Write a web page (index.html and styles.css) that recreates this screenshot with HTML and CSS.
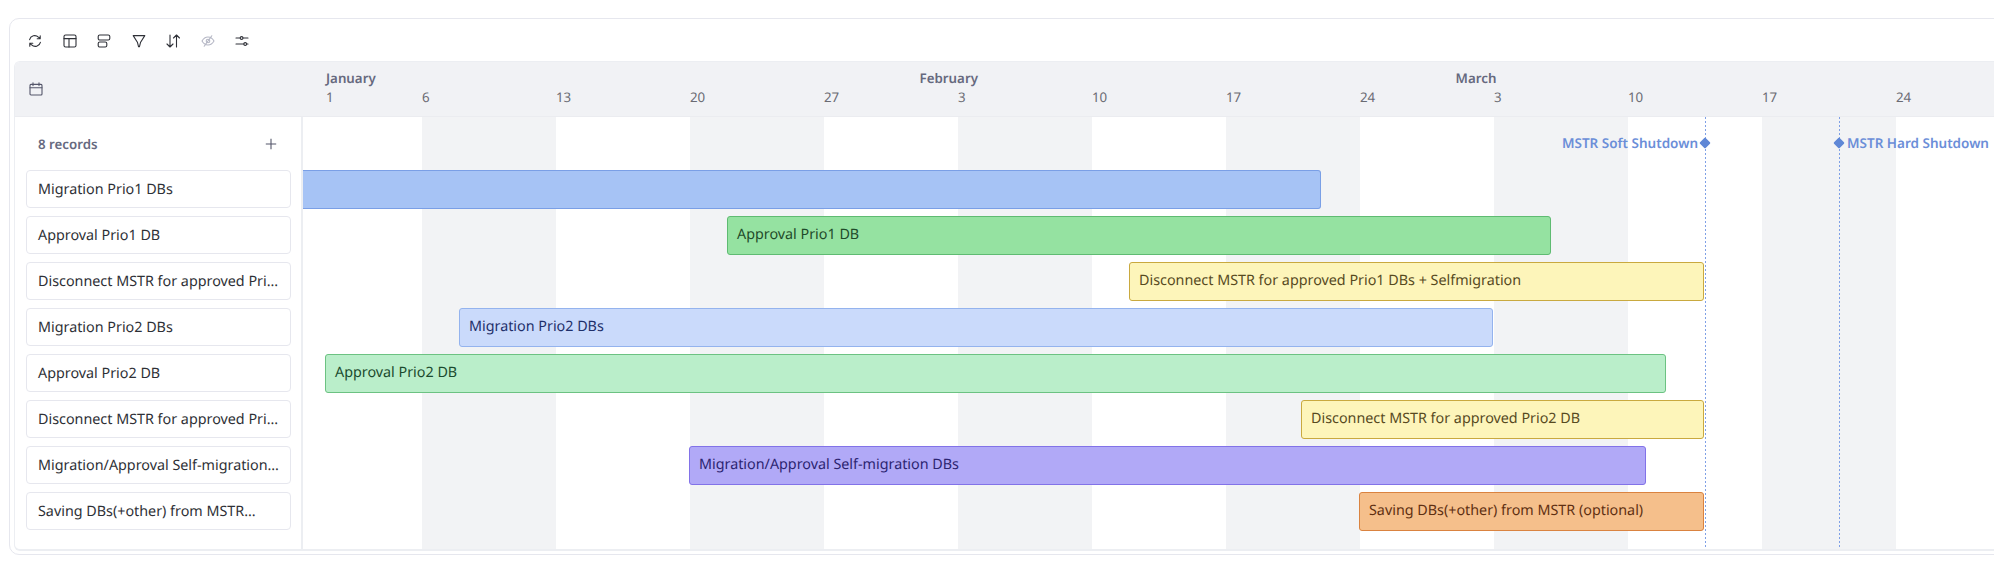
FILE: index.html
```html
<!DOCTYPE html>
<html lang="en">
<head>
<meta charset="utf-8">
<title>Timeline</title>
<link rel="stylesheet" href="styles.css">
</head>
<body>
<div class="card">
  <div class="toolbar">
    <svg class="ico" viewBox="0 0 14 14"><path d="M1.600 5.600A5.200 5.200 0 0 1 10.400 3.200L12.200 4.700M12.200 1.700V4.700H9.200M12.400 8.400A5.200 5.200 0 0 1 3.600 10.800L1.800 9.300M1.800 12.300V9.300H4.800"/></svg>
    <svg class="ico" viewBox="0 0 14 14"><rect x="1" y="1" width="12" height="12" rx="1.600"/><path d="M1 4.600H13M6 4.600V13"/></svg>
    <svg class="ico" viewBox="0 0 14 14"><rect x="1.200" y="1" width="11.600" height="5" rx="1.600"/><rect x="1.200" y="8" width="8.600" height="5" rx="1.600"/></svg>
    <svg class="ico" viewBox="0 0 14 14"><path d="M1.200 1.600H12.800L8.600 8.200 7.400 12.800H6.600L5.400 8.200Z"/></svg>
    <svg class="ico" viewBox="0 0 14 14"><path d="M4 1V13M1 10L4 13 7 10M10.500 13V1M7.500 4L10.500 1 13.500 4"/></svg>
    <svg class="ico ico-off" viewBox="0 0 14 14"><path d="M1 7C2.500 4.400 4.600 3 7 3S11.500 4.400 13 7C11.500 9.600 9.400 11 7 11S2.500 9.600 1 7ZM10.800 1.800L3.200 12.200"/><circle cx="7" cy="7" r="1.800"/></svg>
    <svg class="ico" viewBox="0 0 14 14"><path d="M1 4H5.200M8 4H13M1 10H8.800M11.600 10H13"/><circle cx="6.600" cy="4" r="1.400"/><circle cx="10.200" cy="10" r="1.400"/></svg>
  </div>
  <div class="gantt">
    <div class="head">
      <div class="corner">
        <svg class="ico ico-cal" viewBox="0 0 14 14"><rect x="1" y="2.400" width="12" height="10.600" rx="1"/><path d="M1 5.800H13M4 .8V3.600M10 .8V3.600"/></svg>
      </div>
      <div class="scale">
        <div class="months">
          <span class="month m-jan">January</span>
          <span class="month m-feb">February</span>
          <span class="month">March</span>
        </div>
        <div class="dates">
          <span class="date first">1</span>
          <span class="date">6</span>
          <span class="date">13</span>
          <span class="date">20</span>
          <span class="date">27</span>
          <span class="date">3</span>
          <span class="date">10</span>
          <span class="date">17</span>
          <span class="date">24</span>
          <span class="date">3</span>
          <span class="date">10</span>
          <span class="date">17</span>
          <span class="date">24</span>
        </div>
      </div>
    </div>
    <div class="body">
      <div class="side">
        <div class="side-head">
          <span class="count">8 records</span>
          <svg class="plus" viewBox="0 0 12 12"><path d="M6 .8V11.200M.8 6H11.200"/></svg>
        </div>
        <div class="rec">Migration Prio1 DBs</div>
        <div class="rec">Approval Prio1 DB</div>
        <div class="rec">Disconnect MSTR for approved Prio1 DBs + Selfmigration</div>
        <div class="rec">Migration Prio2 DBs</div>
        <div class="rec">Approval Prio2 DB</div>
        <div class="rec">Disconnect MSTR for approved Prio2 DB</div>
        <div class="rec">Migration/Approval Self-migration DBs</div>
        <div class="rec rec-short">Saving DBs(+other) from MSTR (optional)</div>
      </div>
      <div class="chart">
        <div class="bands">
          <i class="band first"></i><i class="band gray"></i><i class="band"></i><i class="band gray"></i><i class="band"></i><i class="band gray"></i><i class="band"></i><i class="band gray"></i><i class="band"></i><i class="band gray"></i><i class="band"></i><i class="band gray"></i><i class="band"></i>
        </div>
        <div class="miles">
          <div class="mile soft" style="left:1402px"><span class="mile-label">MSTR Soft Shutdown</span><i class="dia"></i></div>
          <div class="mile hard" style="left:1536px"><i class="dia"></i><span class="mile-label">MSTR Hard Shutdown</span></div>
        </div>
        <div class="rows">
          <div class="bar blue" style="margin-left:0;width:1018px"></div>
          <div class="bar green" style="margin-left:424px;width:824px">Approval Prio1 DB</div>
          <div class="bar yellow" style="margin-left:826px;width:575px">Disconnect MSTR for approved Prio1 DBs + Selfmigration</div>
          <div class="bar lblue" style="margin-left:156px;width:1034px">Migration Prio2 DBs</div>
          <div class="bar lgreen" style="margin-left:22px;width:1341px">Approval Prio2 DB</div>
          <div class="bar yellow" style="margin-left:998px;width:403px">Disconnect MSTR for approved Prio2 DB</div>
          <div class="bar purple" style="margin-left:386px;width:957px">Migration/Approval Self-migration DBs</div>
          <div class="bar orange" style="margin-left:1056px;width:345px">Saving DBs(+other) from MSTR (optional)</div>
        </div>
      </div>
    </div>
  </div>
</div>
</body>
</html>
```
FILE: styles.css
```css
* { box-sizing: border-box; }
html, body { margin: 0; height: 100%; overflow: hidden; background: #fff; }
body {
  font-family: "Noto Sans", "Open Sans", sans-serif;
  font-size: 14.330px;
  color: #2e3036;
  text-rendering: geometricPrecision;
}

.card {
  width: 2200px;
  height: 537px;
  margin: 18px 0 0 9px;
  padding: 0 0 3px 4px;
  border: 1px solid #e6e7ee;
  border-radius: 10px;
  display: flex;
  flex-direction: column;
}
.toolbar {
  height: 42px;
  flex: none;
  display: flex;
  align-items: center;
  gap: 20.500px;
  padding: 2px 0 0 14px;
}
.ico {
  width: 14px;
  height: 14px;
  flex: none;
  fill: none;
  stroke: #2f3138;
  stroke-width: 1.100;
  stroke-linecap: round;
  stroke-linejoin: round;
}
.ico-off { stroke: #b4b6c4; }
.ico-cal { stroke: #54566a; }

.gantt {
  flex: 1;
  display: flex;
  flex-direction: column;
  border: 1px solid #eceef2;
  border-width: 1px 0 2px 1px;
  border-radius: 6px;
  overflow: hidden;
}
.head {
  height: 55px;
  flex: none;
  display: flex;
  background: #f1f2f5;
  border-bottom: 1px solid #ebecf0;
}
.corner { width: 288px; flex: none; display: flex; align-items: center; padding-left: 14px; }
.scale { flex: 1; padding-left: 23px; padding-top: 7px; }
.months { display: flex; line-height: 18px; }
.month { font-size: 13.300px; font-weight: 600; color: #66697e; }
.m-jan { width: 593.600px; }
.m-feb { width: 536px; }
.dates { display: flex; line-height: 18px; margin-top: 1px; }
.date { width: 134px; font-size: 13.300px; color: #6a6b73; }
.date.first { width: 96px; }

.body { flex: 1; display: flex; min-height: 0; }
.side {
  width: 288px;
  flex: none;
  border-right: 2px solid #eceef2;
  padding: 0 10px 0 11px;
}
.side-head { height: 53px; display: flex; align-items: center; justify-content: space-between; padding: 0 14px 0 12px; }
.count { font-size: 13.300px; font-weight: 600; color: #666a80; }
.plus { width: 12px; height: 12px; fill: none; stroke: #54566a; stroke-width: 1.100; }
.rec {
  height: 38px;
  margin-bottom: 8px;
  padding: 0 11px;
  background: #fff;
  border: 1px solid #e6e7ee;
  border-radius: 4px;
  line-height: 38px;
  white-space: nowrap;
  overflow: hidden;
  text-overflow: ellipsis;
}
.rec-short { padding-right: 33px; }

.chart { flex: 1; position: relative; min-width: 0; }
.bands { position: absolute; inset: 0; display: flex; }
.band { width: 134px; flex: none; }
.band.first { width: 119px; }
.band.gray { background: #f2f3f5; }

.miles { height: 53px; position: relative; }
.mile {
  position: absolute;
  top: 0;
  width: 1px;
  height: 432px;
  background: repeating-linear-gradient(to bottom, #7fa0e6 0 2px, transparent 2px 4px);
}
.dia {
  position: absolute;
  top: 22px;
  left: -4px;
  width: 8px;
  height: 8px;
  background: #5f87d6;
  transform: rotate(45deg);
  border-radius: 1px;
}
.mile-label {
  position: absolute;
  top: 17px;
  font-size: 13.500px;
  font-weight: 600;
  line-height: 18px;
  white-space: nowrap;
  color: #6b8ed8;
}
.soft .mile-label { right: 8px; }
.hard .mile-label { left: 8px; }

.rows { position: relative; display: flex; flex-direction: column; gap: 7px; }
.bar {
  height: 39px;
  flex: none;
  border: 1px solid;
  border-radius: 3px;
  padding: 0 9px;
  line-height: 36px;
  white-space: nowrap;
  overflow: hidden;
}
.blue { background: #a6c3f5; border-color: #7a9fe6; border-radius: 0 3px 3px 0; border-left: 0; }
.green { background: #95e2a1; border-color: #5fbb72; color: #1f4a2a; }
.yellow { background: #fdf5ba; border-color: #c9a93f; color: #574a1f; }
.lblue { background: #cadafb; border-color: #94b3ee; color: #1e2f6a; }
.lgreen { background: #baeeca; border-color: #6cc282; color: #1b4a2e; }
.purple { background: #b1a9f7; border-color: #8272e8; color: #2c2470; }
.orange { background: #f5bf8b; border-color: #da8340; color: #5f2f12; }
```
